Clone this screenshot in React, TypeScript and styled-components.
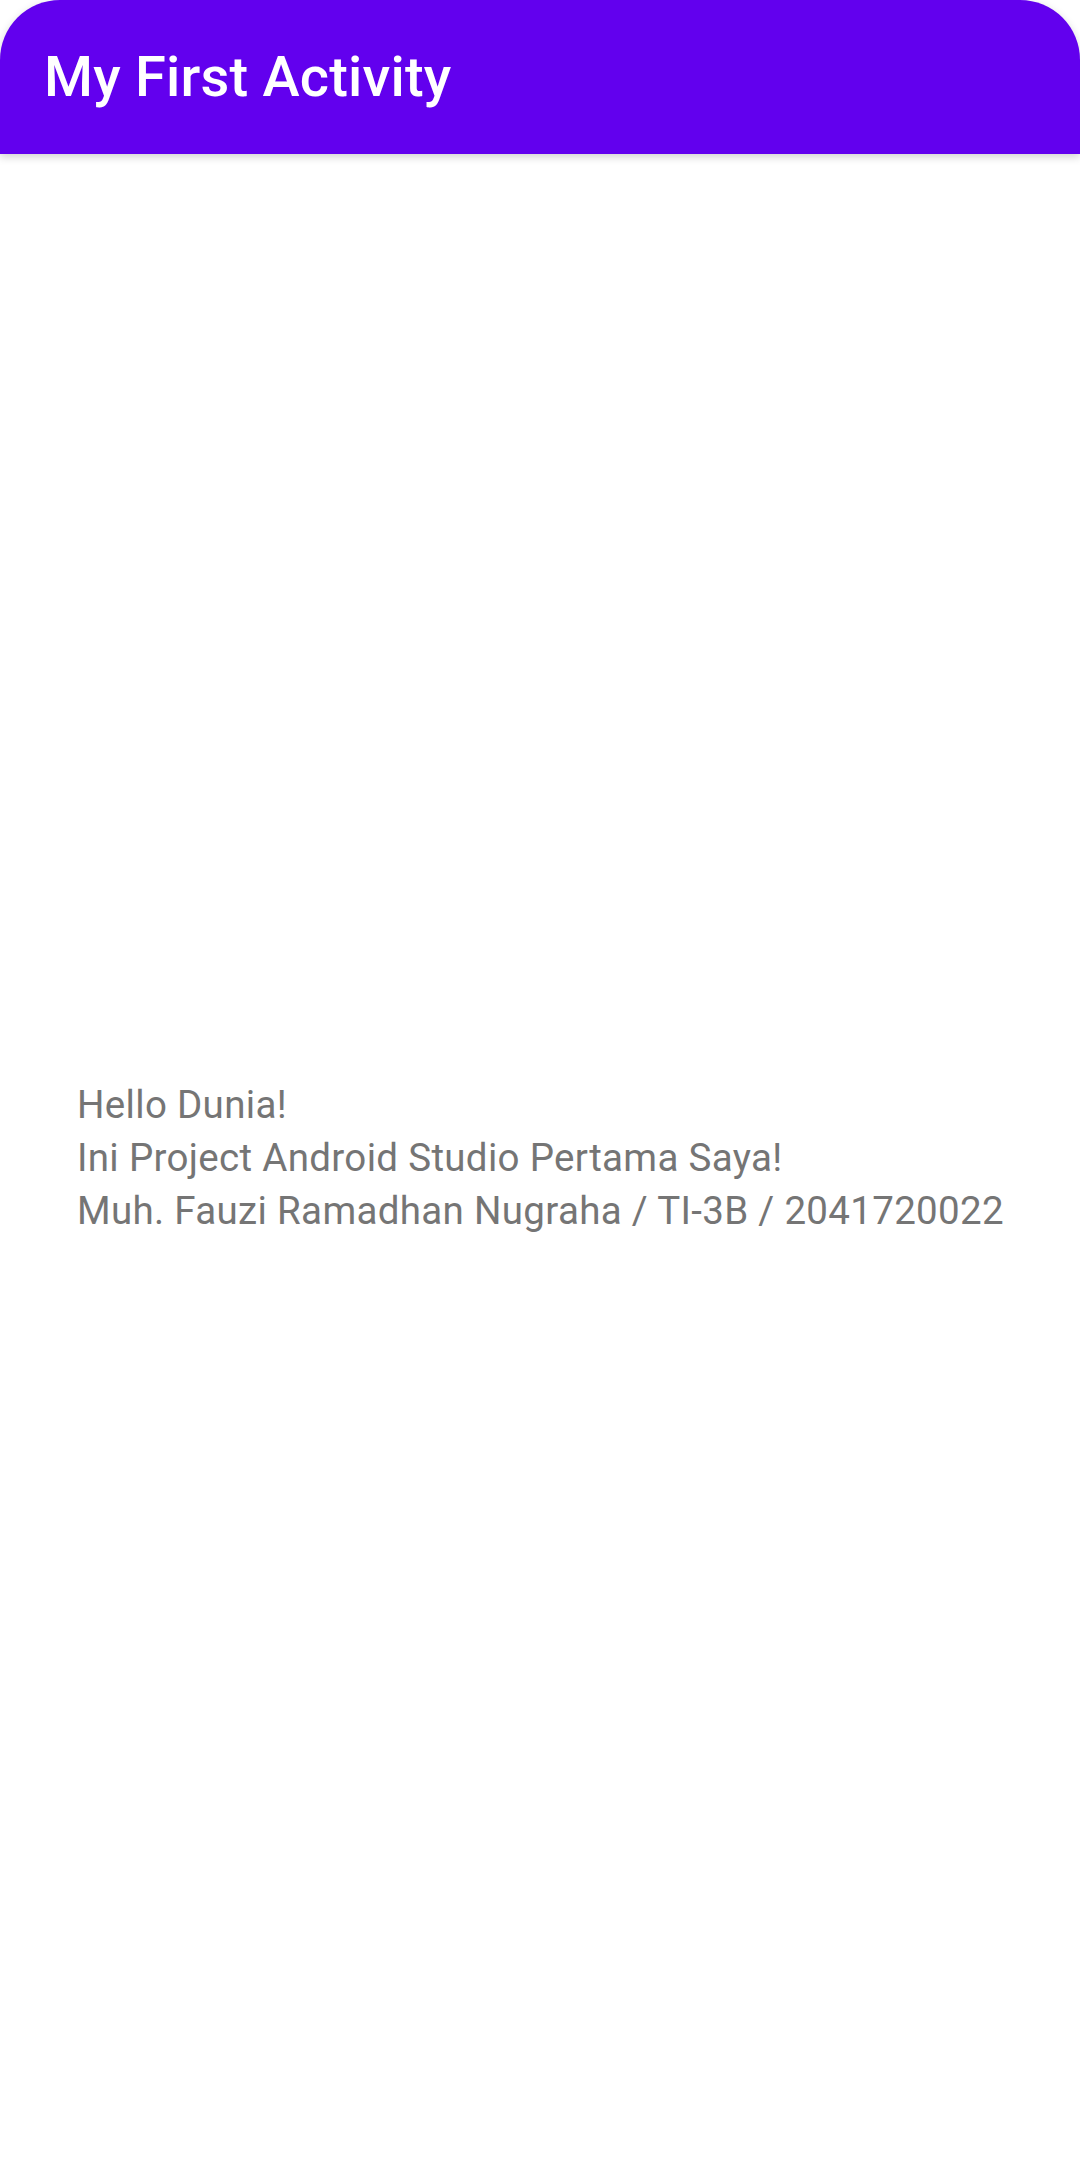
import styled, { createGlobalStyle } from "styled-components";

const GlobalStyle = createGlobalStyle`
  html, body {
    margin: 0;
    padding: 0;
    background: #ffffff;
  }
  body {
    font-family: Roboto, "Noto Sans", sans-serif;
  }
`;

const lines = [
  "Hello Dunia!",
  "Ini Project Android Studio Pertama Saya!",
  "Muh. Fauzi Ramadhan Nugraha / TI-3B / 2041720022",
];

function App() {
  return (
    <Screen>
      <GlobalStyle />
      <AppBar>
        <Title>My First Activity</Title>
      </AppBar>

      <Content>
        <Message>
          {lines.map((line) => (
            <Line key={line}>{line}</Line>
          ))}
        </Message>
      </Content>
    </Screen>
  );
}

export default App;

const Screen = styled.div`
  display: flex;
  flex-direction: column;
  width: 1080px;
  height: 2160px;
  overflow: hidden;
  background: #ffffff;
`;

const AppBar = styled.header`
  position: relative;
  z-index: 1;
  display: flex;
  align-items: center;
  flex-shrink: 0;
  height: 154px;
  padding: 0 44px;
  background-color: #6200ee;
  border-radius: 60px 60px 0 0;
  box-shadow: 0 3px 8px rgba(0, 0, 0, 0.18);
`;

const Title = styled.h1`
  margin: 0;
  color: #ffffff;
  font-family: Roboto, sans-serif;
  font-size: 56px;
  font-weight: 500;
  letter-spacing: 0.2px;
`;

const Content = styled.main`
  flex: 1;
  display: flex;
  align-items: center;
  justify-content: flex-start;
  padding: 0 0 0 77px;
`;

const Message = styled.div`
  display: flex;
  flex-direction: column;
`;

const Line = styled.div`
  color: #757575;
  font-family: Roboto, sans-serif;
  font-size: 38.5px;
  line-height: 53px;
  letter-spacing: 0.32px;
  white-space: nowrap;
`;
